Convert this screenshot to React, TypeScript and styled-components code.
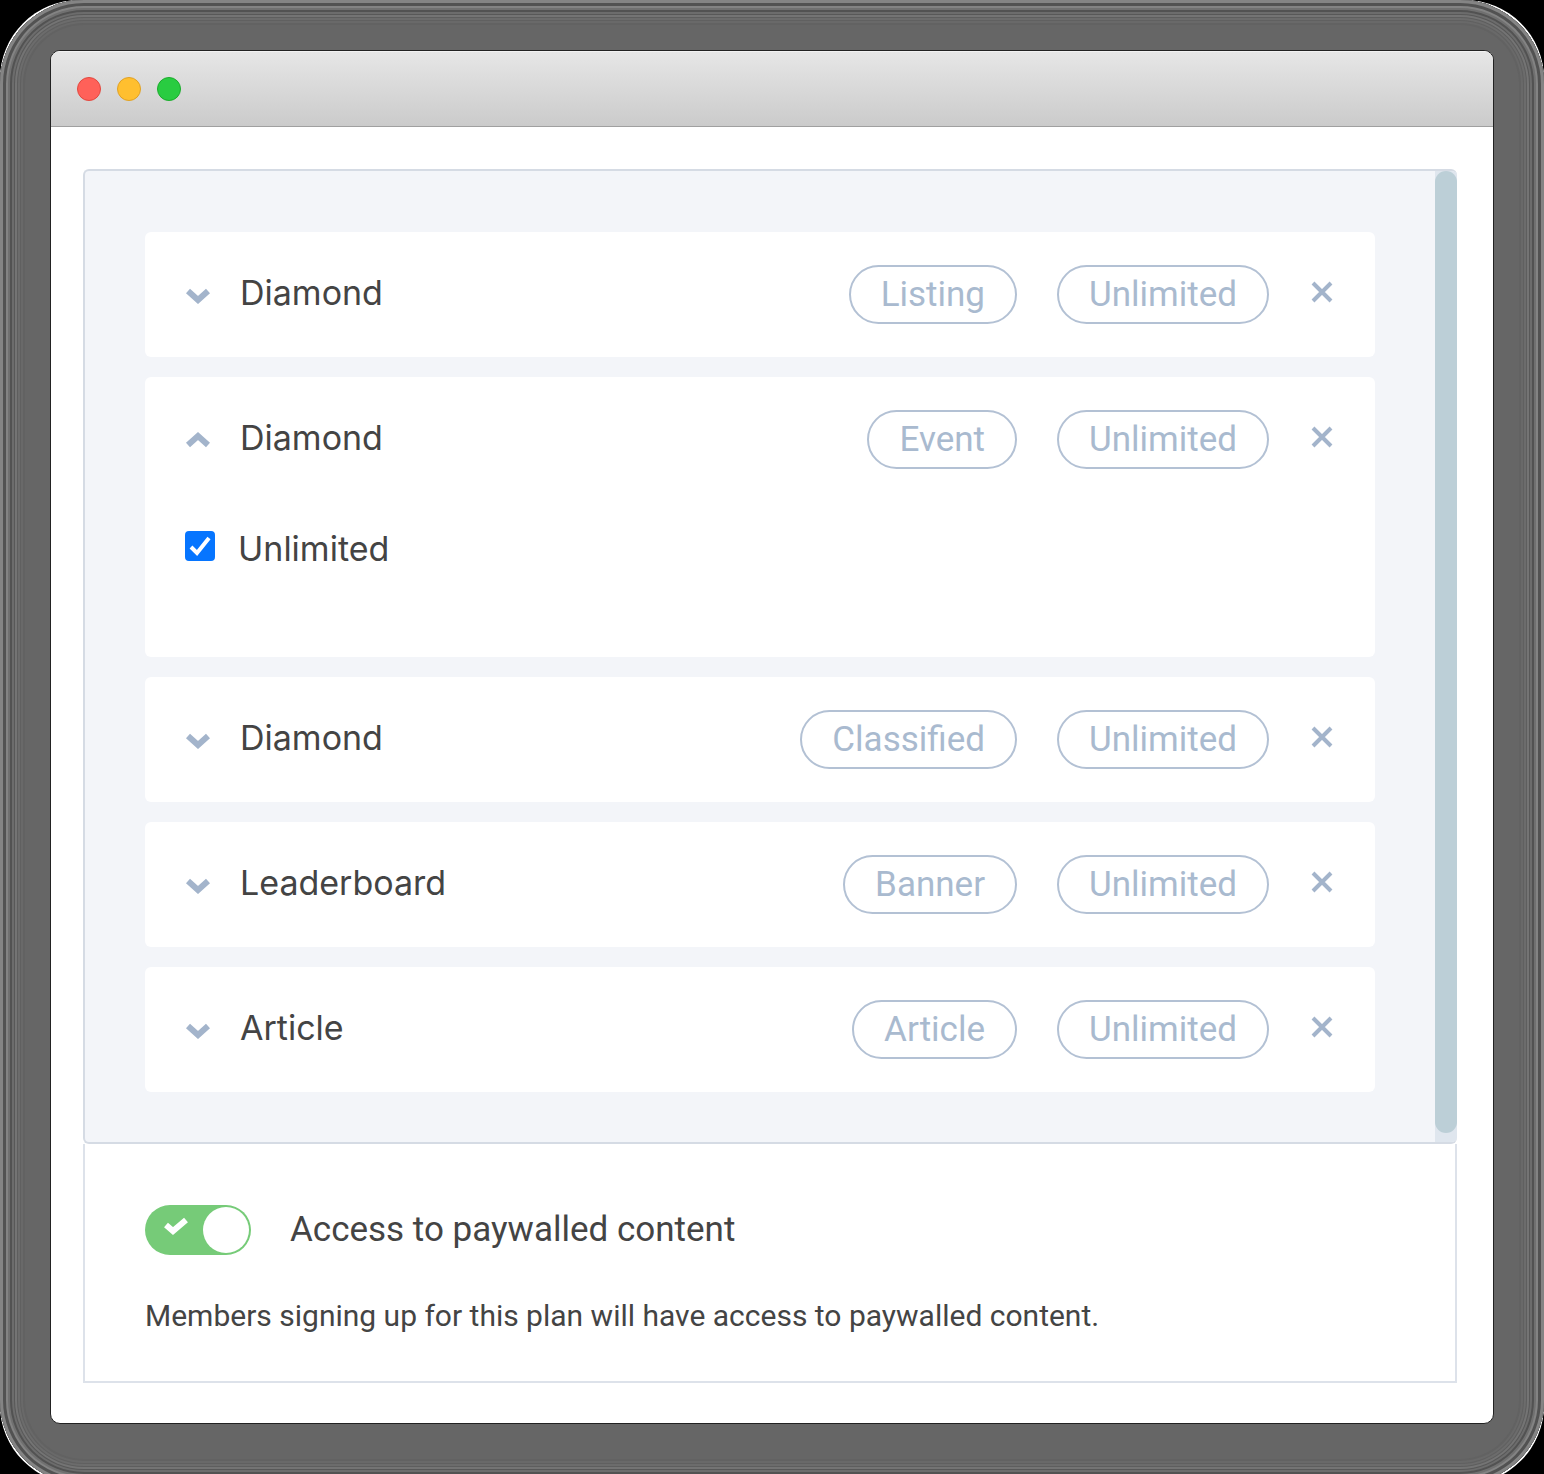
import React, { useState } from "react";
import styled, { createGlobalStyle } from "styled-components";

const GlobalStyle = createGlobalStyle`
  *, *::before, *::after { box-sizing: border-box; }
  body { margin: 0; background: #000; font-family: Roboto, "Liberation Sans", sans-serif; color: #444; }
  button { font: inherit; }
`;

const Page = styled.div`
  overflow: clip;
`;

const Halo = styled.div`
  margin-bottom: -10px;
  border-radius: 79px;
  background: #fff;
`;

const Backdrop = styled.div`
  padding: 50px 50px 60px;
  border-radius: 84px;
  background: #666;
  box-shadow:
    inset 0 0 0 3px #848484,
    inset 0 0 0 6px #525252,
    inset 0 0 0 8px #838383,
    inset 0 0 0 10px #707070,
    inset 0 0 0 12px #525252,
    inset 0 0 0 14px #6c6c6c,
    inset 0 0 0 15px #585858,
    inset 0 0 0 17px #747474,
    inset 0 0 0 18px #5e5e5e,
    inset 0 0 0 20px #6c6c6c,
    inset 0 0 0 21px #606060,
    inset 0 0 0 23px #696969,
    inset 0 0 0 25px #626262;
`;

const Window = styled.section`
  border: 1px solid #222;
  border-radius: 10px;
  background: #fff;
  overflow: hidden;
`;

const TitleBar = styled.header`
  display: flex;
  align-items: center;
  gap: 16px;
  height: 76px;
  padding: 0 26px;
  border-top: 1px solid #f2f2f2;
  border-bottom: 1px solid #a0a0a0;
  background: linear-gradient(#e6e6e6, #cbcbcb);
`;

const Light = styled.button<{ $fill: string; $edge: string }>`
  width: 24px;
  height: 24px;
  padding: 0;
  border: 1px solid ${(p) => p.$edge};
  border-radius: 50%;
  background: ${(p) => p.$fill};
`;

const Content = styled.main`
  padding: 42px 36px 40px 32px;
`;

const Panel = styled.div`
  display: flex;
  border: 2px solid #d5dbe4;
  border-right-width: 0;
  border-radius: 6px;
  background: #f3f5f9;
  overflow: hidden;
`;

const List = styled.ul`
  flex: 1;
  display: flex;
  flex-direction: column;
  gap: 20px;
  margin: 0;
  padding: 61px 60px 50px;
  list-style: none;
`;

const ScrollTrack = styled.div`
  display: flex;
  width: 22px;
  padding-bottom: 9px;
  background: #dfe6ee;
`;

const ScrollThumb = styled.div`
  flex: 1;
  border-radius: 11px;
  background: #bccfd7;
`;

const Card = styled.li`
  border-radius: 6px;
  background: #fff;
`;

const CardHead = styled.div`
  display: flex;
  align-items: center;
  gap: 40px;
  height: 125px;
  padding: 0 40px;
`;

const Name = styled.span`
  flex: 1;
  margin-left: -11px;
  padding-bottom: 4px;
  font-family: Inter, "Liberation Sans", sans-serif;
  font-size: 34px;
  line-height: 36px;
`;

const IconButton = styled.button`
  display: grid;
  place-items: center;
  width: 26px;
  height: 40px;
  padding: 0 0 6px;
  border: 0;
  background: none;
  color: #a3b4cb;
  cursor: pointer;
`;

const Chevron = styled(IconButton)`
  padding: 0;
`;

const Pill = styled.span`
  display: flex;
  align-items: center;
  height: 59px;
  padding: 0 30px;
  border: 2px solid #b3c1d4;
  border-radius: 30px;
  color: #a9bacf;
  font-size: 35px;
`;

const Details = styled.div`
  padding: 29px 40px 90px;
`;

const CheckLabel = styled.label`
  display: flex;
  align-items: flex-start;
  gap: 23px;
  font-family: Inter, "Liberation Sans", sans-serif;
  font-size: 34px;
  line-height: 36px;
`;

const Box = styled.span`
  position: relative;
  display: flex;
  width: 30px;
  height: 30px;
  svg { position: absolute; inset: 0; pointer-events: none; }
`;

const CheckInput = styled.input`
  appearance: none;
  width: 30px;
  height: 30px;
  margin: 0;
  border: 2px solid #0675ff;
  border-radius: 4px;
  &:checked { background: #0675ff; }
`;

const Access = styled.div`
  padding: 56px 60px 45px;
  border: 2px solid #dde2ea;
  border-top: 0;
`;

const ToggleLabel = styled.label`
  display: flex;
  align-items: center;
  gap: 39px;
  font-size: 35px;
  line-height: 60px;
`;

const Switch = styled.span`
  position: relative;
  display: flex;
  svg { position: absolute; left: 18px; top: 11px; pointer-events: none; }
`;

const SwitchInput = styled.input`
  appearance: none;
  display: flex;
  justify-content: flex-start;
  width: 106px;
  height: 50px;
  margin: 0;
  padding: 2px;
  border-radius: 25px;
  background: #b8c2cc;
  &::before { content: ""; width: 46px; border-radius: 50%; background: #fff; }
  &:checked { justify-content: flex-end; background: #76cb78; }
`;

const Note = styled.p`
  margin: 36px 0 0;
  font-size: 30px;
  line-height: 40px;
`;

const ChevronIcon = ({ up }: { up: boolean }) => (
  <svg width="26" height="18" viewBox="0 0 26 18" fill="none" stroke="currentColor" strokeWidth="6" strokeLinejoin="miter">
    <path d={up ? "M3 14 13 5l10 9" : "M3 5l10 9 10-9"} />
  </svg>
);

const CloseIcon = () => (
  <svg width="22" height="22" viewBox="0 0 22 22" fill="none" stroke="currentColor" strokeWidth="4">
    <path d="M2 2l18 18M20 2L2 20" />
  </svg>
);

type Item = { id: number; name: string; kind: string };

const items: Item[] = [
  { id: 1, name: "Diamond", kind: "Listing" },
  { id: 2, name: "Diamond", kind: "Event" },
  { id: 3, name: "Diamond", kind: "Classified" },
  { id: 4, name: "Leaderboard", kind: "Banner" },
  { id: 5, name: "Article", kind: "Article" },
];

function PlanItem({ item, open, onToggle, onRemove }: { item: Item; open: boolean; onToggle: () => void; onRemove: () => void }) {
  return (
    <Card>
      <CardHead>
        <Chevron type="button" aria-expanded={open} aria-label={item.name} onClick={onToggle}>
          <ChevronIcon up={open} />
        </Chevron>
        <Name>{item.name}</Name>
        <Pill>{item.kind}</Pill>
        <Pill>Unlimited</Pill>
        <IconButton type="button" aria-label="Remove" onClick={onRemove}>
          <CloseIcon />
        </IconButton>
      </CardHead>
      {open && (
        <Details>
          <CheckLabel htmlFor={`unlimited-${item.id}`}>
            <Box>
              <CheckInput id={`unlimited-${item.id}`} type="checkbox" defaultChecked />
              <svg viewBox="0 0 30 30" fill="none" stroke="#fff" strokeWidth="4">
                <path d="M6 16l6 6L24 7" />
              </svg>
            </Box>
            Unlimited
          </CheckLabel>
        </Details>
      )}
    </Card>
  );
}

export default function App() {
  const [rows, setRows] = useState(items);
  const [openId, setOpenId] = useState<number | null>(2);
  return (
    <Page>
      <GlobalStyle />
      <Halo>
        <Backdrop>
          <Window>
            <TitleBar>
              <Light type="button" aria-label="Close" $fill="#ff6159" $edge="#e2483f" />
              <Light type="button" aria-label="Minimize" $fill="#ffbf2f" $edge="#e0a125" />
              <Light type="button" aria-label="Zoom" $fill="#29cc41" $edge="#1bac2c" />
            </TitleBar>
            <Content>
              <Panel>
                <List>
                  {rows.map((item) => (
                    <PlanItem
                      key={item.id}
                      item={item}
                      open={openId === item.id}
                      onToggle={() => setOpenId(openId === item.id ? null : item.id)}
                      onRemove={() => setRows(rows.filter((r) => r.id !== item.id))}
                    />
                  ))}
                </List>
                <ScrollTrack>
                  <ScrollThumb />
                </ScrollTrack>
              </Panel>
              <Access>
                <ToggleLabel htmlFor="paywall">
                  <Switch>
                    <SwitchInput id="paywall" type="checkbox" role="switch" defaultChecked />
                    <svg width="26" height="20" viewBox="0 0 26 20" fill="none" stroke="#fff" strokeWidth="6" strokeLinejoin="miter">
                      <path d="M3 9l7 6L23 4" />
                    </svg>
                  </Switch>
                  Access to paywalled content
                </ToggleLabel>
                <Note>Members signing up for this plan will have access to paywalled content.</Note>
              </Access>
            </Content>
          </Window>
        </Backdrop>
      </Halo>
    </Page>
  );
}
